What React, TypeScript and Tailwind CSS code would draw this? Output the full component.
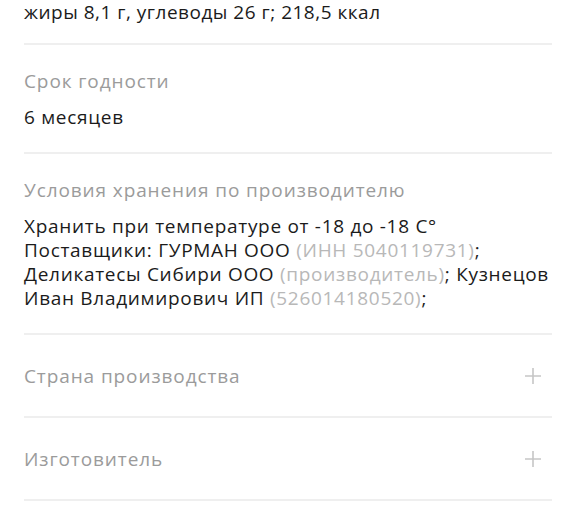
const fontStack = { fontFamily: '"Open Sans", "Noto Sans", sans-serif' };

function Divider() {
  return <div className="h-[2px] bg-[#efefef]" />;
}

function PlusIcon() {
  return (
    <svg width="18" height="18" viewBox="0 0 18 18" className="shrink-0">
      <path d="M9 1v16M1 9h16" stroke="#c6c6c6" strokeWidth="1.6" fill="none" />
    </svg>
  );
}

function Info({ title, children }: { title: string; children: React.ReactNode }) {
  return (
    <>
      <div className="pt-[24px] pb-[23px]">
        <div className="text-[19px] leading-[24px] tracking-[0.9px] text-[#9b9b9b]">{title}</div>
        <div className="mt-[12px] text-[19px] leading-[24px] tracking-[0.7px] text-[#1b1b1b]">
          {children}
        </div>
      </div>
      <Divider />
    </>
  );
}

function Collapsed({ title }: { title: string }) {
  return (
    <>
      <div className="flex items-center justify-between pt-[29px] pb-[28px] pr-[10px]">
        <div className="text-[19px] leading-[24px] tracking-[0.9px] text-[#9b9b9b]">{title}</div>
        <PlusIcon />
      </div>
      <Divider />
    </>
  );
}

export default function App() {
  return (
    <div className="w-[576px] h-[520px] bg-white overflow-hidden" style={fontStack}>
      <div className="px-[24px]">
        <div className="pb-[19px] text-[19px] leading-[24px] tracking-[0.5px] text-[#1b1b1b] whitespace-nowrap">
          жиры 8,1 г, углеводы 26 г; 218,5 ккал
        </div>
        <Divider />

        <Info title="Срок годности">6 месяцев</Info>

        <Info title="Условия хранения по производителю">
          <div className="whitespace-nowrap">Хранить при температуре от -18 до -18 C°</div>
          <div className="whitespace-nowrap">
            Поставщики: ГУРМАН ООО <span className="text-[#b8b8b8]">(ИНН 5040119731)</span>;
          </div>
          <div className="whitespace-nowrap">
            Деликатесы Сибири ООО <span className="text-[#b8b8b8]">(производитель)</span>; Кузнецов
          </div>
          <div className="whitespace-nowrap">
            Иван Владимирович ИП <span className="text-[#b8b8b8]">(526014180520)</span>;
          </div>
        </Info>

        <Collapsed title="Страна производства" />
        <Collapsed title="Изготовитель" />
      </div>
    </div>
  );
}
